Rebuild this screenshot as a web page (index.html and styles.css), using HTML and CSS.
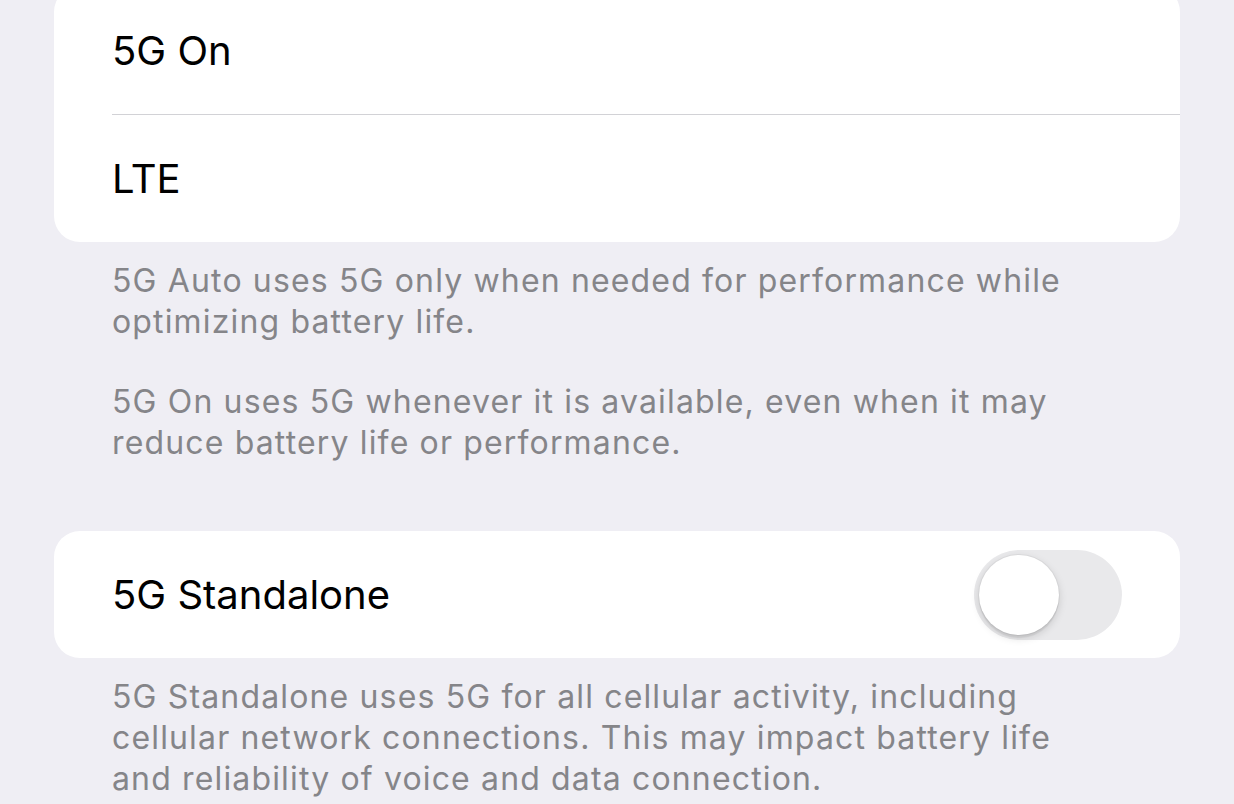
FILE: index.html
```html
<!DOCTYPE html>
<html lang="en">
<head>
  <meta charset="UTF-8" />
  <meta name="viewport" content="width=device-width, initial-scale=1.0"/>
  <title>Voice &amp; Data</title>
  <link rel="stylesheet" href="styles.css">
</head>
<body>

  <div class="settings">

    <!-- network mode list -->
    <div class="group group-top">
      <div class="row">
        <span class="row-label">5G On</span>
      </div>
      <div class="row">
        <span class="row-label">LTE</span>
      </div>
    </div>

    <div class="group-footer">
      <p>5G Auto uses 5G only when needed for performance while<br>optimizing battery life.</p>
      <p>5G On uses 5G whenever it is available, even when it may<br>reduce battery life or performance.</p>
    </div>

    <!-- standalone switch -->
    <div class="group group-standalone">
      <div class="row">
        <span class="row-label">5G Standalone</span>
        <label class="switch">
          <input type="checkbox">
          <span class="knob"></span>
        </label>
      </div>
    </div>

    <div class="group-footer">
      <p>5G Standalone uses 5G for all cellular activity, including<br>cellular network connections. This may impact battery life<br>and reliability of voice and data connection.</p>
    </div>

  </div>

</body>
</html>
```

FILE: styles.css
```css
body {
  margin: 0;
  background: #efeef4;
  font-family: Inter, "Noto Sans", sans-serif;
  color: #000;
  overflow: hidden;
}

.settings {
  padding: 0 54px;
}

.group {
  background: #fff;
  border-radius: 26px;
}

.group-top {
  margin-top: -14px;
}

.group-standalone {
  margin-top: 68px;
}

.row {
  display: flex;
  align-items: center;
  justify-content: space-between;
  height: 127px;
  padding: 0 58px;
  position: relative;
}

.group-top .row:first-child {
  height: 128px;
}

.group-top .row + .row {
  border-top: 1px solid #d2d2d6;
  margin-left: 58px;
  padding-left: 0;
}

.row-label {
  font-size: 40px;
  letter-spacing: 0;
}

.group-footer {
  padding: 18px 58px 0;
  color: #858589;
  font-size: 32px;
  line-height: 41px;
  letter-spacing: 1.15px;
}

.group-footer p {
  margin: 0 0 39px;
}

.switch {
  position: relative;
  width: 148px;
  height: 90px;
}

.switch input {
  display: none;
}

.knob {
  position: absolute;
  inset: 0;
  background: #e9e9eb;
  border-radius: 45px;
}

.knob::before {
  content: "";
  position: absolute;
  left: 5px;
  top: 5px;
  width: 80px;
  height: 80px;
  border-radius: 50%;
  background: #fff;
  box-shadow: 0 3px 8px rgba(0, 0, 0, 0.15), 0 3px 1px rgba(0, 0, 0, 0.06), 0 0 0 1px rgba(0, 0, 0, 0.04);
}
```
